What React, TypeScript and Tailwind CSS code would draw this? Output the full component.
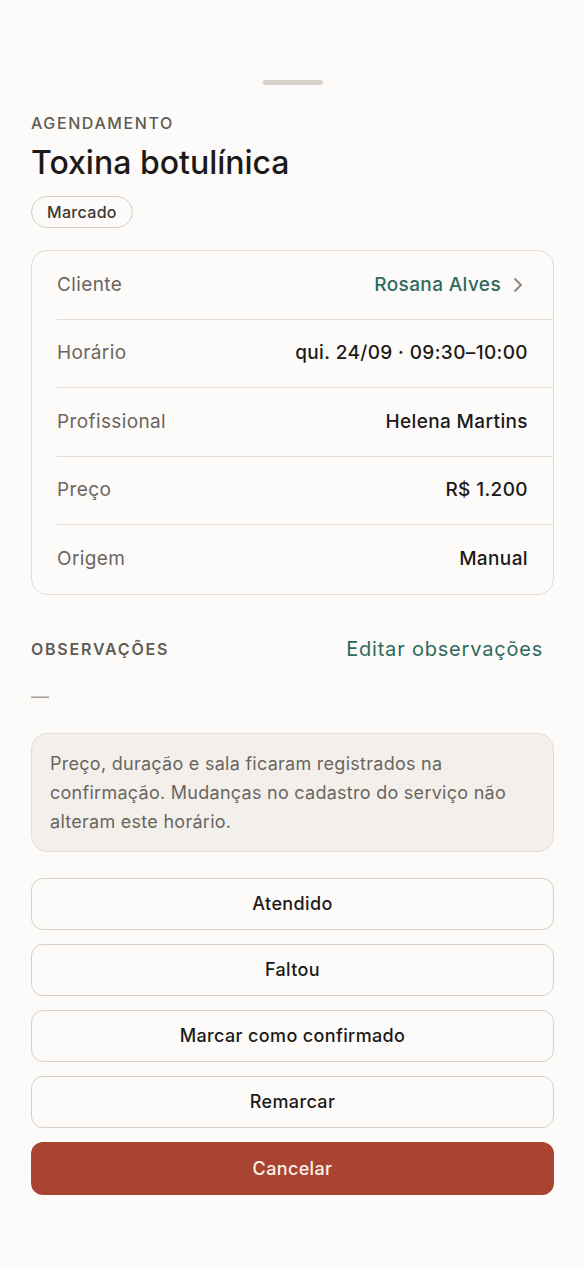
import { ChevronRight } from "lucide-react";

const rows = [
  { label: "Cliente", value: "Rosana Alves", link: true },
  { label: "Horário", value: "qui. 24/09 · 09:30–10:00" },
  { label: "Profissional", value: "Helena Martins" },
  { label: "Preço", value: "R$ 1.200" },
  { label: "Origem", value: "Manual" },
];

const actions = ["Atendido", "Faltou", "Marcar como confirmado", "Remarcar"];

export default function App() {
  return (
    <div
      className="min-h-[1266px] bg-[#fdfbf9] px-[31px] pt-[80px] text-[#1c1a18]"
      style={{ fontFamily: "Inter, 'Noto Sans', sans-serif" }}
    >
      <div className="flex justify-center">
        <div className="h-[5px] w-[60px] rounded-full bg-[#d8d2ca]" />
      </div>

      <div className="mt-[28px] text-[16px] font-medium uppercase leading-[20px] tracking-[0.1em] text-[#615b55]">
        Agendamento
      </div>
      <h1 className="mt-[10px] text-[32px] font-medium leading-[40px]">
        Toxina botulínica
      </h1>
      <div className="mt-[13px] flex">
        <span className="flex h-[32px] items-center rounded-full border border-[#d6cfc7] px-[15px] text-[16px] font-medium tracking-[0.02em] text-[#3b3733]">
          Marcado
        </span>
      </div>

      <div className="mt-[22px] rounded-[16px] border border-[#e1dbd4] bg-[#fdfbf9] pl-[25px]">
        {rows.map((r, i) => (
          <div
            key={r.label}
            className={`flex h-[68.6px] items-center justify-between pr-[25px] ${
              i < rows.length - 1 ? "border-b border-[#e4ded7]" : ""
            }`}
          >
            <span className="text-[19px] tracking-[0.02em] text-[#6b655f]">{r.label}</span>
            {r.link ? (
              <span className="flex items-center gap-[5px] text-[19px] font-medium tracking-[0.02em] text-[#2e6a5c]">
                {r.value}
                <ChevronRight size={24} strokeWidth={1.8} className="-mr-[2px] text-[#8a847e]" />
              </span>
            ) : (
              <span className="text-[19px] font-medium tracking-[0.02em] text-[#1c1a18]">{r.value}</span>
            )}
          </div>
        ))}
      </div>

      <div className="mt-[40px] flex h-[28px] items-center justify-between pr-[11px]">
        <span className="text-[16px] font-semibold uppercase tracking-[0.11em] text-[#615b55]">
          Observações
        </span>
        <span className="text-[20px] tracking-[0.04em] text-[#2e6a5c]">Editar observações</span>
      </div>
      <div className="mt-[22px] text-[18px] leading-[24px] text-[#a8a29b]">—</div>

      <div className="mt-[24px] rounded-[16px] border border-[#e3ddd6] bg-[#f3f0ec] px-[18px] py-[15px] text-[18px] leading-[29px] tracking-[0.015em] text-[#6b655f]">
        Preço, duração e sala ficaram registrados na confirmação. Mudanças no cadastro do serviço não
        alteram este horário.
      </div>

      <div className="mt-[26px] flex flex-col gap-[14px]">
        {actions.map((a) => (
          <button
            key={a}
            className="h-[52px] rounded-[12px] border border-[#d6cfc7] bg-[#fdfbf9] text-[18px] font-medium tracking-[0.02em] text-[#1c1a18]"
          >
            {a}
          </button>
        ))}
        <button className="h-[53px] rounded-[12px] bg-[#a84431] text-[18px] font-medium tracking-[0.02em] text-[#fbefe9]">
          Cancelar
        </button>
      </div>
    </div>
  );
}
